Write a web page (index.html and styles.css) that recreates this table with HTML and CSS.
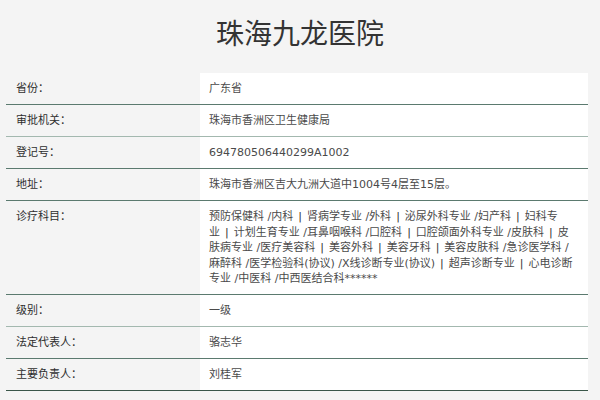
FILE: index.html
```html
<!DOCTYPE html>
<html lang="zh-CN">
<head>
<meta charset="utf-8">
<title>珠海九龙医院</title>
<link rel="stylesheet" href="styles.css">
</head>
<body>
<div class="page">
  <h1 class="title">珠海九龙医院</h1>
  <div class="info">
    <div class="row"><div class="label">省份：</div><div class="value">广东省</div></div>
    <div class="row soft"><div class="label">审批机关：</div><div class="value">珠海市香洲区卫生健康局</div></div>
    <div class="row"><div class="label">登记号：</div><div class="value">694780506440299A1002</div></div>
    <div class="row"><div class="label">地址：</div><div class="value">珠海市香洲区吉大九洲大道中1004号4层至15层。</div></div>
    <div class="row"><div class="label">诊疗科目：</div><div class="value">
      <span class="line">预防保健科 /内科<span class="sep">|</span>肾病学专业 /外科<span class="sep">|</span>泌尿外科专业 /妇产科<span class="sep">|</span>妇科专</span>
      <span class="line">业<span class="sep">|</span>计划生育专业 /耳鼻咽喉科 /口腔科<span class="sep">|</span>口腔颌面外科专业 /皮肤科<span class="sep">|</span>皮</span>
      <span class="line">肤病专业 /医疗美容科<span class="sep">|</span>美容外科<span class="sep">|</span>美容牙科<span class="sep">|</span>美容皮肤科 /急诊医学科 /</span>
      <span class="line">麻醉科 /医学检验科(协议) /X线诊断专业(协议)<span class="sep">|</span>超声诊断专业<span class="sep">|</span>心电诊断</span>
      <span class="line">专业 /中医科 /中西医结合科******</span>
    </div></div>
    <div class="row soft"><div class="label">级别：</div><div class="value">一级</div></div>
    <div class="row"><div class="label">法定代表人：</div><div class="value">骆志华</div></div>
    <div class="row strong"><div class="label">主要负责人：</div><div class="value">刘桂军</div></div>
  </div>
</div>
</body>
</html>
```

FILE: styles.css
```css
html, body {
  margin: 0;
  padding: 0;
  background: #f4f4f4;
}

.page {
  font-family: "DejaVu Sans", "Noto Sans CJK SC", sans-serif;
  font-size: 11px;
  color: #444;
}

.title {
  margin: 0;
  padding-top: 12px;
  height: 41px;
  line-height: 40px;
  text-align: center;
  font-family: "Noto Sans CJK SC", sans-serif;
  font-weight: 400;
  font-size: 28px;
  color: #333;
}

.info {
  margin: 20px 0 0 6px;
  width: 582px;
}

.row {
  display: grid;
  grid-template-columns: 194px 1fr;
  border-bottom: 1px solid #5b7a6f;
  line-height: 15.5px;
}

.row.soft {
  border-bottom-color: #a3b8af;
}

.row.strong {
  border-bottom-color: #3a5649;
}

.label {
  padding: 8px 0 7.5px 10px;
  color: #2e2e2e;
}

.value {
  background: #fff;
  padding: 8px 4px 7.5px 9px;
  color: #4a4a4a;
}

.line {
  display: block;
  white-space: nowrap;
}

.sep {
  margin: 0 5px;
  color: #333;
}
```
